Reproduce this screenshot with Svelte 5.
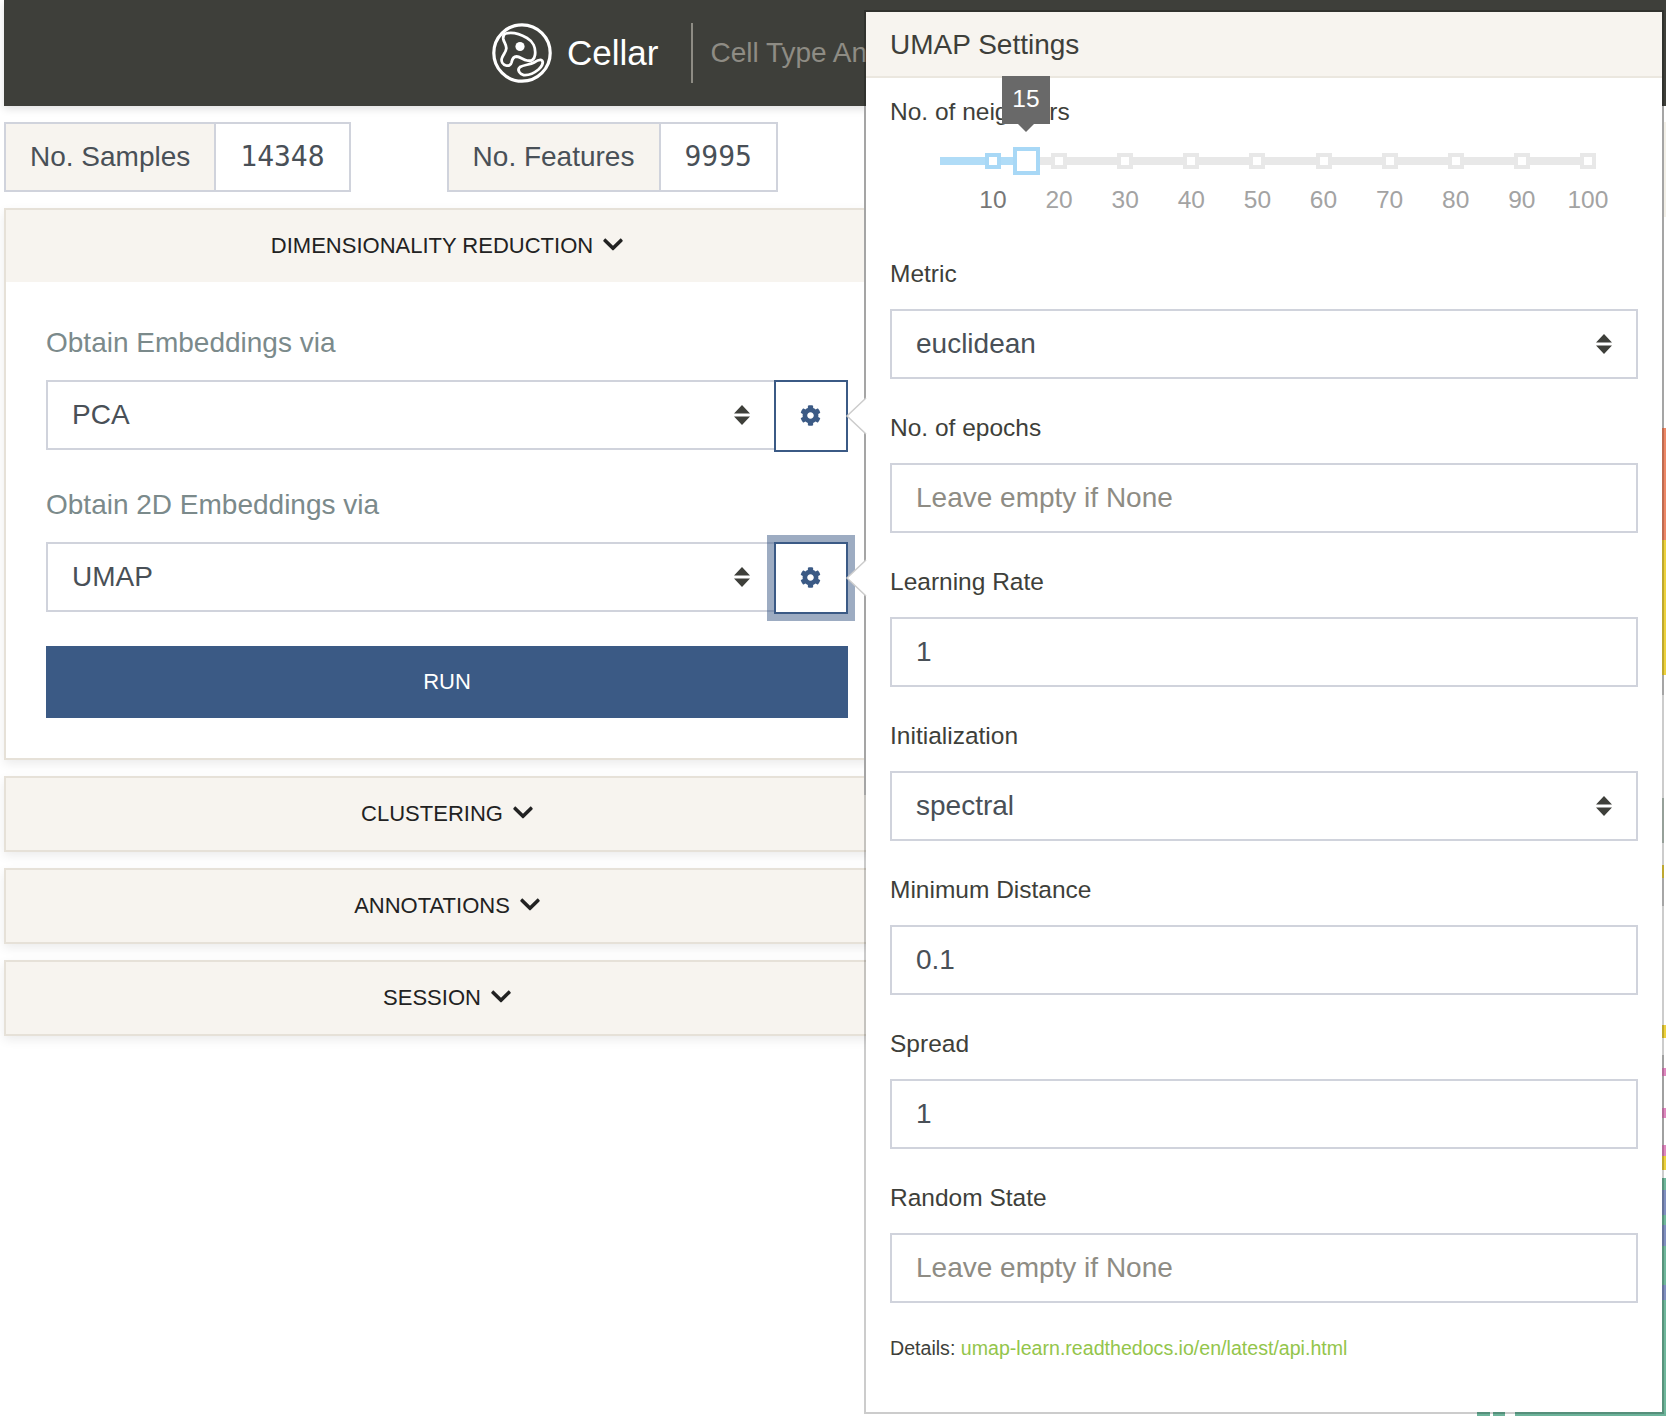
<script>
  const sections = ['CLUSTERING', 'ANNOTATIONS', 'SESSION'];
  const ticks = [10, 20, 30, 40, 50, 60, 70, 80, 90, 100];
  const chevron = 'M207.029 381.476L12.686 187.132c-9.373-9.373-9.373-24.569 0-33.941l22.667-22.667c9.357-9.357 24.522-9.375 33.901-.04L224 284.505l154.745-154.021c9.379-9.335 24.544-9.317 33.901.04l22.667 22.667c9.373 9.373 9.373 24.569 0 33.941L240.971 381.476c-9.373 9.372-24.569 9.372-33.942 0z';
  const cog = 'M487.4 315.7l-42.6-24.6c4.3-23.2 4.3-47 0-70.2l42.6-24.6c4.9-2.8 7.1-8.6 5.5-14-11.1-35.6-30-67.8-54.7-94.6-3.8-4.1-10-5.1-14.8-2.3L380.8 110c-17.9-15.4-38.5-27.3-60.8-35.1V25.8c0-5.6-3.9-10.5-9.4-11.7-36.7-8.2-74.3-7.8-109.2 0-5.5 1.2-9.4 6.1-9.4 11.7V75c-22.2 7.9-42.8 19.8-60.8 35.1L88.7 85.5c-4.9-2.8-11-1.9-14.8 2.3-24.7 26.7-43.6 58.9-54.7 94.6-1.7 5.4.6 11.2 5.5 14L67.3 221c-4.3 23.2-4.3 47 0 70.2l-42.6 24.6c-4.9 2.8-7.1 8.6-5.5 14 11.1 35.6 30 67.8 54.7 94.6 3.8 4.1 10 5.1 14.8 2.3l42.6-24.6c17.9 15.4 38.5 27.3 60.8 35.1v49.2c0 5.6 3.9 10.5 9.4 11.7 36.7 8.2 74.3 7.8 109.2 0 5.5-1.2 9.4-6.1 9.4-11.7v-49.2c22.2-7.9 42.8-19.8 60.8-35.1l42.6 24.6c4.9 2.8 11 1.9 14.8-2.3 24.7-26.7 43.6-58.9 54.7-94.6 1.5-5.5-.7-11.3-5.6-14.1zM256 336c-44.1 0-80-35.9-80-80s35.9-80 80-80 80 35.9 80 80-35.9 80-80 80z';

  const fields = [
    { label: 'Metric', kind: 'select', value: 'euclidean' },
    { label: 'No. of epochs', kind: 'input', value: '' },
    { label: 'Learning Rate', kind: 'input', value: '1' },
    { label: 'Initialization', kind: 'select', value: 'spectral' },
    { label: 'Minimum Distance', kind: 'input', value: '0.1' },
    { label: 'Spread', kind: 'input', value: '1' },
    { label: 'Random State', kind: 'input', value: '' }
  ];

  const tickLeft = (t) => 993 - 940 + ((t - 10) / 10) * 66.1;
</script>

<div class="page">
  <header class="topbar">
    <svg class="logo" viewBox="0 0 60 60" fill="none" stroke="#fff">
      <circle cx="30" cy="30" r="28.2" stroke-width="3.2" />
      <path stroke-width="2.8" d="M14 10.500c6-1.500 14 .5 21 4.500 6 3.500 9 10 8 17-.6 4.500-3.500 6.500-8 5.500-4-.9-7-3.800-10.500-4-3 0-4.500 3.500-5 6-.6 2.600-3 3.700-5.500 3-3.200-.9-5-3.800-4.200-7 .9-3.800 4.200-6.200 4.500-10 .3-3.600-2.500-6.200-3-9.500-.3-2.600.5-5 2.700-5.500z" />
      <circle cx="28" cy="23.500" r="4.600" fill="#fff" stroke="none" />
      <path stroke-width="2.8" d="M28 44c4-2.500 10-2 14-4.500 3-1.900 6-3.700 8-2 2 2-.5 6.500-3.500 9-4 3.300-10 6-15 5.500-3.500-.5-7-5-3.500-8z" />
    </svg>
    <span class="brand">Cellar</span>
    <span class="divider"></span>
    <span class="tagline">Cell Type Annotation Platform</span>
  </header>

  <div class="plot-left"></div>
  <div class="plot-right"></div>
  <div class="plot-right outer"></div>
  <div class="plot-bottom"></div>

  <main class="sidebar">
    <div class="stats">
      <div class="stat">
        <span class="stat-label">No. Samples</span>
        <span class="stat-value">14348</span>
      </div>
      <div class="stat">
        <span class="stat-label">No. Features</span>
        <span class="stat-value">9995</span>
      </div>
    </div>

    <section class="card">
      <div class="card-head">
        DIMENSIONALITY REDUCTION
        <svg class="chev" viewBox="0 0 448 512"><path d={chevron} /></svg>
      </div>
      <div class="card-body">
        <div class="group-label">Obtain Embeddings via</div>
        <div class="picker">
          <div class="select">
            <span>PCA</span>
            <svg class="updown" viewBox="0 0 16 20"><path d="M8 0l8 8.500H0zM8 20L0 11.500h16z" /></svg>
          </div>
          <button class="gear" aria-label="PCA settings">
            <svg viewBox="0 0 512 512"><path d={cog} /></svg>
          </button>
        </div>
        <div class="group-label second">Obtain 2D Embeddings via</div>
        <div class="picker">
          <div class="select">
            <span>UMAP</span>
            <svg class="updown" viewBox="0 0 16 20"><path d="M8 0l8 8.500H0zM8 20L0 11.500h16z" /></svg>
          </div>
          <button class="gear focused" aria-label="UMAP settings">
            <svg viewBox="0 0 512 512"><path d={cog} /></svg>
          </button>
        </div>
        <button class="run">RUN</button>
      </div>
    </section>

    {#each sections as name}
      <section class="card closed">
        <div class="card-head">
          {name}
          <svg class="chev" viewBox="0 0 448 512"><path d={chevron} /></svg>
        </div>
      </section>
    {/each}
  </main>

  <aside class="popover">
    <svg class="beak first" viewBox="0 0 20 36"><path d="M20 0L1 18l19 18" /></svg>
    <svg class="beak second" viewBox="0 0 20 36"><path d="M20 0L1 18l19 18" /></svg>
    <h3 class="pop-title">UMAP Settings</h3>
    <div class="pop-body">
      <div class="field-label">No. of neighbors</div>
      <div class="slider">
        <div class="track"></div>
        <div class="fill"></div>
        {#each ticks as t}
          <span class="tick" class:on={t === 10} style="left: {tickLeft(t)}px"></span>
          <span class="tick-text" class:on={t === 10} style="left: {tickLeft(t)}px">{t}</span>
        {/each}
        <span class="handle"></span>
        <span class="tip">15</span>
      </div>

      {#each fields as f}
        <div class="field-label">{f.label}</div>
        {#if f.kind === 'select'}
          <div class="select wide">
            <span>{f.value}</span>
            <svg class="updown" viewBox="0 0 16 20"><path d="M8 0l8 8.500H0zM8 20L0 11.500h16z" /></svg>
          </div>
        {:else}
          <input class="input" type="text" placeholder="Leave empty if None" value={f.value} />
        {/if}
      {/each}

      <p class="details">Details: <a href="#details">umap-learn.readthedocs.io/en/latest/api.html</a></p>
    </div>
  </aside>
</div>

<style>
  :global(body) {
    margin: 0;
    background: #fff;
  }

  .page {
    position: relative;
    width: 1666px;
    height: 1416px;
    overflow: hidden;
    font-family: "Liberation Sans", Arial, sans-serif;
    color: #3e3f3a;
    padding-left: 4px;
    box-sizing: border-box;
  }

  .topbar {
    display: flex;
    align-items: center;
    height: 106px;
    padding-left: 488px;
    background: #3e3f3a;
    box-shadow: 0 3px 8px rgba(0, 0, 0, 0.12);
  }

  .logo {
    width: 60px;
    height: 60px;
    margin-top: -1px;
  }

  .brand {
    margin-left: 15px;
    font-size: 35px;
    color: #fff;
  }

  .divider {
    width: 2px;
    height: 60px;
    margin: 0 17px 0 33px;
    background: #8e8c84;
  }

  .tagline {
    font-size: 28px;
    color: #8e8c84;
    white-space: nowrap;
  }

  /* the plot that peeks out around the settings panel */
  .plot-left {
    position: absolute;
    left: 864px;
    top: 106px;
    width: 2px;
    height: 689px;
    background: #cfcfcf;
  }

  .plot-right {
    position: absolute;
    left: 1662px;
    top: 106px;
    width: 2px;
    height: 1310px;
    background: linear-gradient(to bottom,
      #cfcfcf 0 322px, #ee8866 322px 434px, #eed23c 434px 569px, #cfcfcf 569px 589px,
      #fff 589px 692px, #bcc8c0 692px 737px, #fff 737px 759px, #eed23c 759px 772px,
      #d0d0d0 772px 800px, #fff 800px 919px, #eed23c 919px 932px, #fff 932px 949px,
      #c8c8c8 949px 962px, #e088c0 962px 970px, #c8c8c8 970px 1002px, #e088c0 1002px 1012px,
      #c8c8c8 1012px 1039px, #e088c0 1039px 1050px, #eed23c 1050px 1064px, #fff 1064px 1072px,
      #70b89c 1072px 1084px, #8090c0 1084px 1109px, #70b89c 1109px 1119px, #8090c0 1119px 1140px,
      #70b89c 1140px 1179px, #8090c0 1179px 1194px, #70b89c 1194px);
  }

  .plot-right.outer {
    left: 1664px;
    background: linear-gradient(to bottom,
      #fff 0 16px, #f3f0e8 16px 111px, #fff 111px 322px, #ee8866 322px 434px, #eed23c 434px 569px,
      #fff 569px 919px, #eed23c 919px 932px, #fff 932px 962px, #e088c0 962px 970px, #fff 970px 1002px,
      #e088c0 1002px 1012px, #fff 1012px 1039px, #e088c0 1039px 1050px, #eed23c 1050px 1064px,
      #fff 1064px 1072px, #70b89c 1072px 1084px, #8090c0 1084px 1109px, #70b89c 1109px 1119px,
      #8090c0 1119px 1140px, #70b89c 1140px 1179px, #8090c0 1179px 1194px, #70b89c 1194px);
  }

  .plot-bottom {
    position: absolute;
    left: 1477px;
    right: 0;
    bottom: 0;
    height: 4px;
    background: linear-gradient(to right, #6cb39a 0 13px, #fff 13px 16px, #6cb39a 16px 28px, #fff 28px 38px, #6cb39a 38px);
  }

  .sidebar {
    width: 886px;
    padding-top: 16px;
  }

  .stats {
    display: flex;
    gap: 96px;
    margin-bottom: 16px;
  }

  .stat {
    display: flex;
    height: 70px;
    box-sizing: border-box;
    border: 2px solid #d0d3dc;
    font-size: 28px;
    line-height: 66px;
    color: #495057;
  }

  .stat-label {
    padding: 0 24px;
    background: #f7f4ef;
    border-right: 2px solid #d0d3dc;
  }

  .stat-value {
    padding: 0 24px;
    font-family: "DejaVu Sans Mono", monospace;
    font-size: 28px;
  }

  .stat + .stat .stat-label {
    padding-right: 25px;
  }

  .stat + .stat .stat-value {
    padding-left: 23px;
  }

  .card {
    margin-bottom: 16px;
    border: 2px solid #e6e1d8;
    box-shadow: 0 4px 10px rgba(0, 0, 0, 0.08);
  }

  .card.closed {
    height: 76px;
    box-sizing: border-box;
    background: #f7f4ef;
  }

  .card-head {
    display: flex;
    align-items: center;
    justify-content: center;
    gap: 10px;
    height: 72px;
    background: #f7f4ef;
    font-size: 22px;
    color: #222;
  }

  .chev {
    width: 20px;
    height: 23px;
    fill: #222;
    margin-top: -3px;
  }

  .card-body {
    padding: 40px 40px 40px;
    box-sizing: border-box;
  }

  .group-label {
    height: 42px;
    margin-bottom: 16px;
    font-size: 28px;
    line-height: 42px;
    color: #7b8a8b;
  }

  .group-label.second {
    margin-top: 31px;
  }

  .picker {
    display: flex;
    height: 72px;
    margin-bottom: 32px;
  }

  .select {
    flex: 1;
    display: flex;
    align-items: center;
    justify-content: space-between;
    height: 70px;
    box-sizing: border-box;
    padding: 0 24px;
    border: 2px solid #d0d3dc;
    border-right: 0;
    font-size: 28px;
    color: #495057;
  }

  .select.wide {
    flex: none;
    border-right: 2px solid #d0d3dc;
    margin-bottom: 30px;
  }

  .updown {
    width: 16px;
    height: 20px;
    fill: #3e3f3a;
  }

  .gear {
    display: flex;
    align-items: center;
    justify-content: center;
    width: 74px;
    height: 72px;
    padding: 0 2px 2px 0;
    box-sizing: border-box;
    border: 2px solid #3b5a85;
    background: #fff;
  }

  .gear svg {
    width: 21px;
    height: 21px;
    fill: #3b5a85;
  }

  .gear.focused {
    box-shadow: 0 0 0 7px rgba(59, 90, 133, 0.5);
  }

  .run {
    display: block;
    width: 802px;
    height: 72px;
    border: 0;
    background: #3b5a85;
    color: #fff;
    font: 22px "Liberation Sans", Arial, sans-serif;
  }

  .popover {
    position: absolute;
    left: 864px;
    top: 10px;
    width: 800px;
    height: 1404px;
    box-sizing: border-box;
    background: #fff;
    background-clip: padding-box;
    border: 2px solid rgba(0, 0, 0, 0.2);
  }

  .beak {
    position: absolute;
    left: -20px;
    width: 20px;
    height: 36px;
    fill: #fff;
    stroke: #ccc;
    stroke-width: 1.5;
    overflow: visible;
  }

  .beak.first { top: 386px; }
  .beak.second { top: 548px; }

  .pop-title {
    margin: 0;
    height: 66px;
    box-sizing: border-box;
    padding-left: 24px;
    background: #f7f4ef;
    border-bottom: 2px solid #ebe7df;
    font-size: 28px;
    font-weight: 400;
    line-height: 66px;
  }

  .pop-body {
    padding: 15px 24px 0;
  }

  .field-label {
    height: 37px;
    margin-bottom: 17px;
    font-size: 24.500px;
    line-height: 37px;
  }

  .slider {
    position: relative;
    height: 94px;
    margin: -16px 0 30px 50px;
  }

  .track {
    position: absolute;
    left: 0;
    top: 26px;
    width: 656px;
    height: 8px;
    background: #e8e8e8;
  }

  .fill {
    position: absolute;
    left: 0;
    top: 26px;
    width: 85px;
    height: 8px;
    background: #b0dcf7;
  }

  .tick {
    position: absolute;
    top: 22px;
    width: 16px;
    height: 16px;
    margin-left: -8px;
    box-sizing: border-box;
    border: 4px solid #e8e8e8;
    background: #fff;
  }

  .tick.on {
    border-color: #a8d8f6;
  }

  .tick-text {
    position: absolute;
    top: 50px;
    font-size: 24.500px;
    line-height: 37px;
    color: #a3a3a3;
    transform: translateX(-50%);
  }

  .tick-text.on {
    color: #777;
  }

  .handle {
    position: absolute;
    left: 73px;
    top: 16px;
    width: 27px;
    height: 28px;
    box-sizing: border-box;
    border: 4px solid #a8d8f6;
    background: #fff;
  }

  .tip {
    position: absolute;
    left: 62px;
    top: -55px;
    width: 48px;
    height: 48px;
    background: #696969;
    color: #fff;
    font-size: 24.500px;
    line-height: 46px;
    text-align: center;
  }

  .tip::after {
    content: '';
    position: absolute;
    left: 16px;
    top: 48px;
    border: 8px solid transparent;
    border-top-color: #696969;
    border-bottom: 0;
  }

  .input {
    display: block;
    width: 100%;
    height: 70px;
    margin: 0 0 30px;
    padding: 0 24px;
    box-sizing: border-box;
    border: 2px solid #d0d3dc;
    border-radius: 0;
    outline: none;
    font: 28px "Liberation Sans", Arial, sans-serif;
    color: #495057;
  }

  .input::placeholder {
    color: #8e8c84;
    opacity: 1;
  }

  .details {
    margin: -1px 0 0;
    font-size: 19.600px;
    line-height: 32px;
  }

  .details a {
    color: #93c54b;
    text-decoration: none;
  }
</style>
